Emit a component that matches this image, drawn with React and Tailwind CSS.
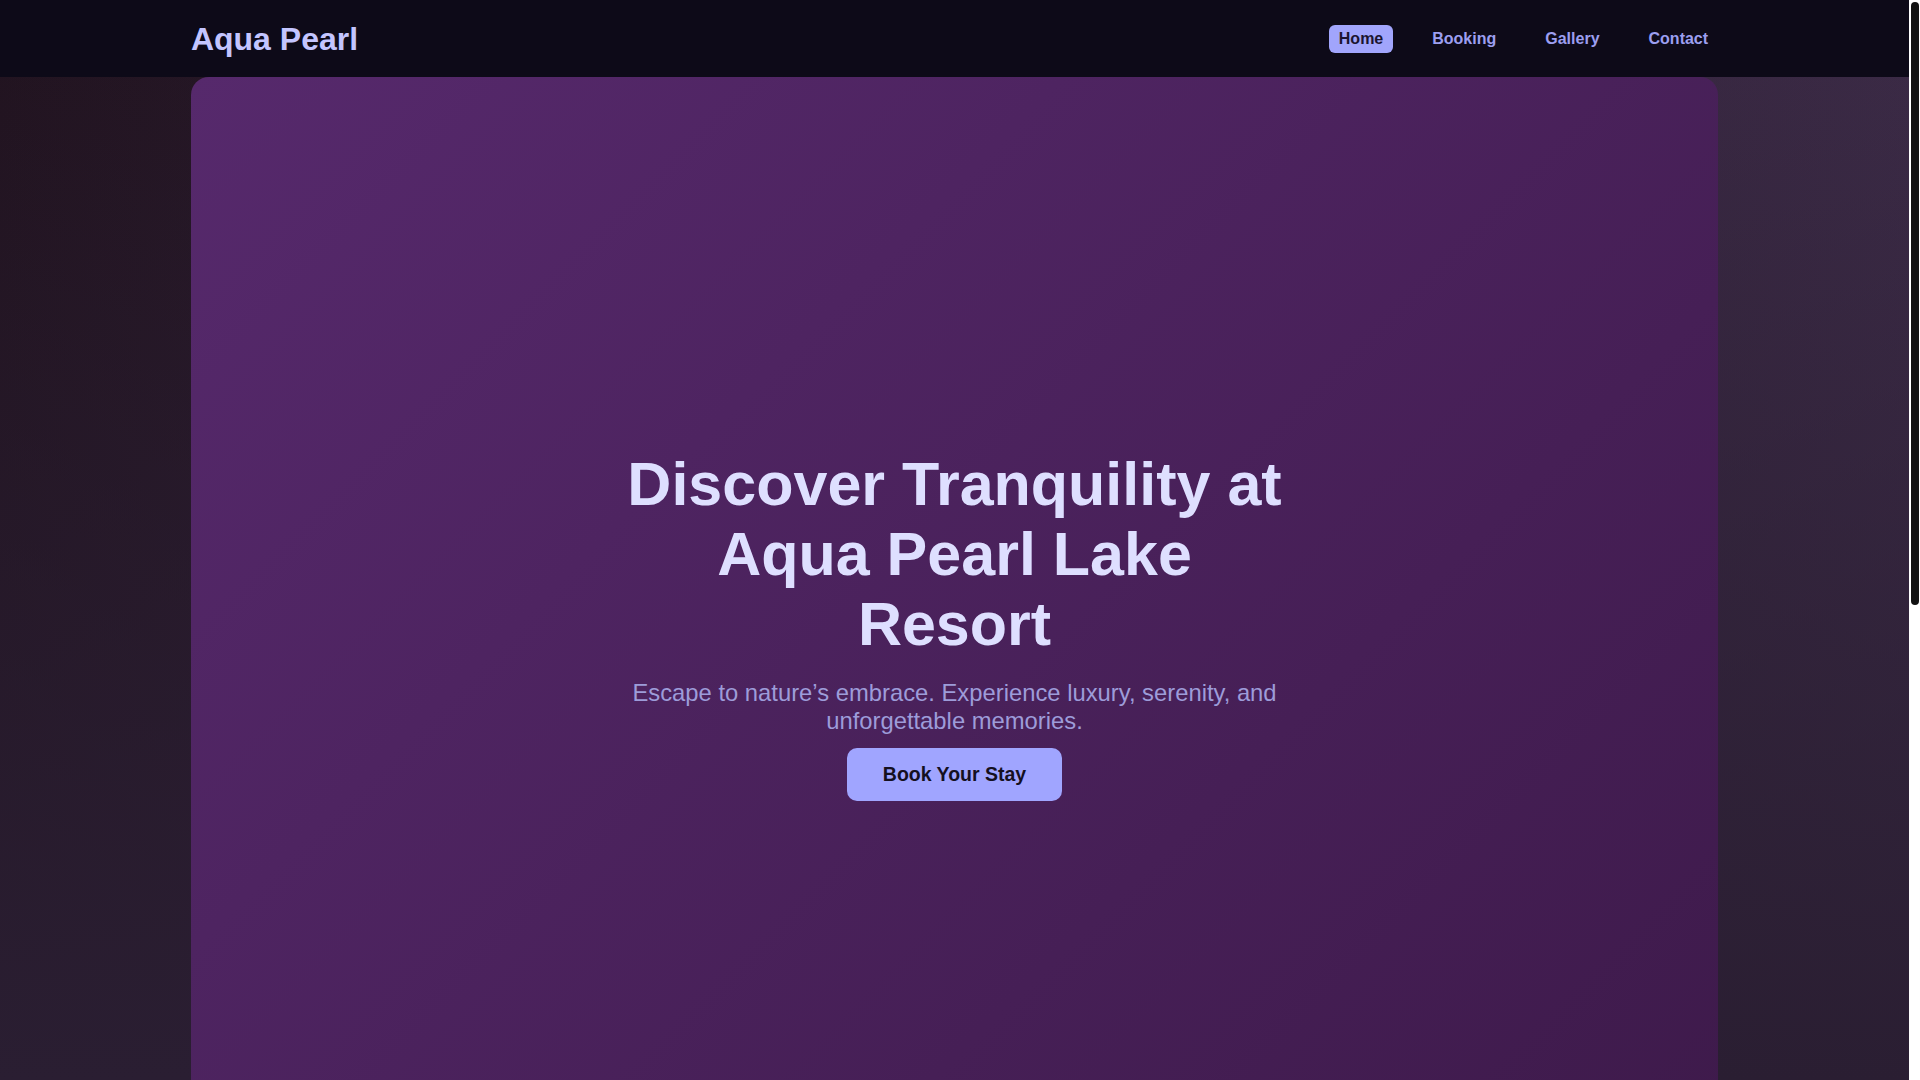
import React from 'react';

const links = ['Home', 'Booking', 'Gallery', 'Contact'];

const Header = () => (
  <header className="h-[77px] bg-[#0d0a18] shrink-0">
    <div className="w-4/5 mx-auto h-full flex items-center justify-between">
      <h1 className="text-[32px] font-bold text-[#c3c5ff] leading-none">Aqua Pearl</h1>
      <nav className="flex items-center gap-[29px]">
        {links.map((l) => (
          <a
            key={l}
            href={`#${l.toLowerCase()}`}
            className={
              l === 'Home'
                ? 'px-[10px] py-[5px] rounded-md bg-[#a1a5fc] text-[#1b1530] text-[16px] font-bold leading-[18px]'
                : 'px-[10px] py-[5px] rounded-md text-[#9c9ff0] text-[16px] font-bold leading-[18px]'
            }
          >
            {l}
          </a>
        ))}
      </nav>
    </div>
  </header>
);

const Hero = () => (
  <section id="home" className="h-[1096px] flex flex-col items-center justify-center text-center px-8">
    <div className="max-w-[676px] flex flex-col items-center">
      <h2 className="text-[61px] leading-[70px] font-bold text-[#dedfff] mb-[20px]">
        Discover Tranquility at Aqua Pearl Lake Resort
      </h2>
      <p className="text-[23.8px] leading-[28px] text-[#9d9cd9] mb-[13px]">
        Escape to nature’s embrace. Experience luxury, serenity, and unforgettable memories.
      </p>
      <a
        href="#booking"
        className="px-[36px] py-[15px] rounded-[10px] bg-[#a0a5ff] text-[#15101f] text-[19.5px] font-bold leading-[23px]"
      >
        Book Your Stay
      </a>
    </div>
  </section>
);

const Booking = () => (
  <section id="booking" className="py-24 px-16 flex flex-col items-center">
    <h3 className="text-[40px] font-bold text-[#dedfff] mb-10">Book Your Stay</h3>
    <form className="w-full max-w-[640px] flex flex-col gap-5">
      {['Full Name', 'Email', 'Check-in Date', 'Guests'].map((f) => (
        <label key={f} className="flex flex-col gap-2 text-[#9d9cd9] text-[18px]">
          {f}
          <input className="h-12 rounded-lg bg-[#2a1535] border border-[#5b3a73] px-4 text-[#dedfff]" />
        </label>
      ))}
      <button type="button" className="mt-4 py-4 rounded-[10px] bg-[#a0a5ff] text-[#15101f] text-[19px] font-bold">
        Confirm Booking
      </button>
    </form>
  </section>
);

const Scrollbar = () => (
  <div className="fixed top-0 right-0 h-screen w-[11px] bg-white">
    <div className="absolute top-[2px] left-[2px] w-[8px] h-[603px] rounded-full bg-[#111111]"></div>
  </div>
);

export default function App() {
  return (
    <div className="mr-[11px] min-h-screen bg-fixed bg-[linear-gradient(to_bottom,rgba(42,30,50,0)_0%,#2a1e32_100%),linear-gradient(to_right,#21131f,#3c2b47)] font-['Liberation_Sans',Arial,sans-serif]">
      <Header />
      <main className="w-4/5 mx-auto rounded-t-[18px] bg-[linear-gradient(135deg,#56296c,#361540)] pb-20">
        <Hero />
        <Booking />
      </main>
      <Scrollbar />
    </div>
  );
}
